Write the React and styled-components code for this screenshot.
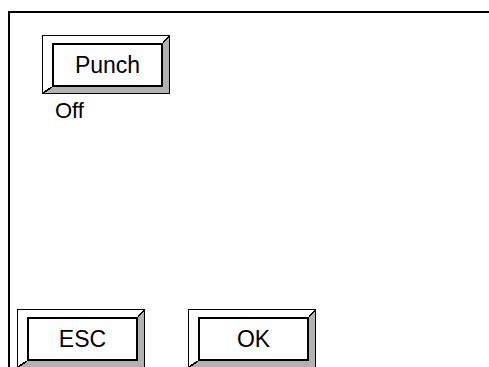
import React from "react";
import styled, { createGlobalStyle } from "styled-components";

const GlobalStyle = createGlobalStyle`
  html, body {
    margin: 0;
    padding: 0;
    background: #ffffff;
    overflow: hidden;
  }
  body {
    font-family: "Liberation Sans", Arial, sans-serif;
  }
`;

function App() {
  return (
    <>
      <GlobalStyle />
      <Page>
        <Frame>
          <TopArea>
            <BevelButton label="Punch" />
            <Status>Off</Status>
          </TopArea>
          <BottomRow>
            <BevelButton label="ESC" />
            <BevelButton label="OK" />
          </BottomRow>
        </Frame>
      </Page>
    </>
  );
}

function BevelButton({ label }) {
  return (
    <Outer type="button">
      <Bevel>
        <Face>{label}</Face>
      </Bevel>
    </Outer>
  );
}

export default App;

const Page = styled.div`
  width: 489px;
  height: 367px;
  padding: 11px 0 0 8px;
  box-sizing: border-box;
  overflow: hidden;
`;

const Frame = styled.div`
  width: 540px;
  height: 355px;
  border-top: 2px solid #000;
  border-left: 2px solid #000;
  display: flex;
  flex-direction: column;
`;

const TopArea = styled.div`
  display: flex;
  flex-direction: column;
  align-items: flex-start;
  padding: 22px 0 0 32px;
`;

const Status = styled.div`
  margin: 4px 0 0 13px;
  font-size: 22px;
  color: #000;
`;

const BottomRow = styled.div`
  margin-top: auto;
  display: flex;
  gap: 43px;
  padding-left: 7px;
`;

const Outer = styled.button`
  display: block;
  padding: 0;
  margin: 0;
  width: 128px;
  height: 59px;
  box-sizing: border-box;
  border: 1.5px solid #000;
  background: #ffffff;
  cursor: pointer;
  font: inherit;
`;

const Bevel = styled.div`
  position: relative;
  height: 100%;
  box-sizing: border-box;
  border-style: solid;
  border-width: 7px 6px 6px 9px;
  border-color: #ffffff #b2b2b2 #b2b2b2 #ffffff;

  &::before,
  &::after {
    content: "";
    position: absolute;
    background: linear-gradient(
      to top left,
      transparent 42%,
      #000 42%,
      #000 58%,
      transparent 58%
    );
  }
  &::before {
    top: -7px;
    right: -6px;
    width: 6px;
    height: 7px;
  }
  &::after {
    bottom: -6px;
    left: -9px;
    width: 9px;
    height: 6px;
  }
`;

const Face = styled.div`
  height: 100%;
  box-sizing: border-box;
  border: 2px solid #000;
  background: #ffffff;
  display: flex;
  align-items: center;
  justify-content: center;
  font-family: "Liberation Sans", Arial, sans-serif;
  font-size: 23px;
  color: #000;
`;
